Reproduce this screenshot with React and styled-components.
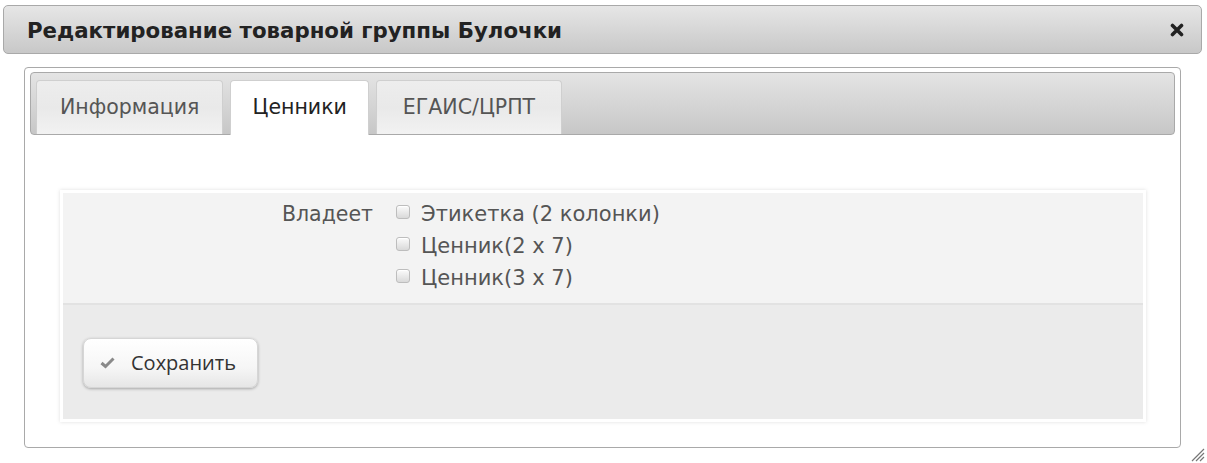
import React, { useState } from "react";
import styled, { createGlobalStyle } from "styled-components";

const Global = createGlobalStyle`
  html, body {
    margin: 0;
    padding: 0;
    background: #fff;
  }
  body {
    font-family: "DejaVu Sans", Verdana, sans-serif;
    color: #333;
  }
`;

const Dialog = styled.div`
  position: relative;
  width: 1207px;
  height: 463px;
  box-sizing: border-box;
  padding: 5px 5px 0 3px;
`;

const TitleBar = styled.div`
  height: 49px;
  box-sizing: border-box;
  border: 1px solid #a9a9a9;
  border-radius: 5px;
  background: linear-gradient(#e6e6e6, #c8c8c8);
  display: flex;
  align-items: center;
  justify-content: space-between;
  padding: 1px 14px 0 23px;
`;

const Title = styled.span`
  font-weight: bold;
  font-size: 21.3px;
  color: #222;
`;

const Close = styled.button`
  width: 20px;
  height: 20px;
  padding: 0;
  border: 0;
  background: none;
  display: flex;
  align-items: center;
  justify-content: center;
  cursor: pointer;
`;

const Body = styled.div`
  padding: 13px 21px 0 21px;
`;

const Panel = styled.div`
  height: 381px;
  box-sizing: border-box;
  border: 1px solid #a9a9a9;
  border-radius: 4px;
  padding: 4px 5px;
`;

const TabsHeader = styled.div`
  height: 63px;
  box-sizing: border-box;
  border: 1px solid #a9a9a9;
  border-radius: 4px;
  background: linear-gradient(#e4e4e4, #c7c7c7);
  display: flex;
  align-items: flex-end;
  gap: 7px;
  padding: 0 0 0 5px;
`;

const Tab = styled.button`
  height: ${(p) => (p.$active ? "55px" : "54px")};
  margin-bottom: ${(p) => (p.$active ? "-1px" : "0")};
  box-sizing: border-box;
  border: 1px solid #cfcfcf;
  border-bottom: 0;
  border-radius: 4px 4px 0 0;
  background: ${(p) =>
    p.$active ? "#fff" : "linear-gradient(#ededed, #e9e9e9 50%, #f2f2f2)"};
  color: ${(p) => (p.$active ? "#222" : "#555")};
  font-family: "DejaVu Sans", Verdana, sans-serif;
  font-size: 20.5px;
  padding: 0 ${(p) => p.$pad || 22}px 2px;
  cursor: pointer;
`;

const TabBody = styled.div`
  padding: 55px 29px 0 30px;
`;

const FormBox = styled.div`
  border: 3px solid #fff;
  box-shadow: 0 0 4px rgba(0, 0, 0, 0.13);
`;

const FieldSection = styled.div`
  background: #f3f3f3;
  border-bottom: 2px solid #e2e2e2;
  display: grid;
  grid-template-columns: 310px 1fr;
  column-gap: 23px;
  padding: 5px 0 9px;
`;

const Label = styled.div`
  text-align: right;
  font-size: 20.5px;
  line-height: 32px;
  color: #555;
`;

const Options = styled.div`
  display: flex;
  flex-direction: column;
`;

const Option = styled.label`
  display: flex;
  align-items: center;
  gap: 11px;
  font-size: 21px;
  line-height: 32px;
  color: #555;
  cursor: pointer;
`;

const Box = styled.span`
  width: 14px;
  height: 14px;
  box-sizing: border-box;
  border: 1px solid #bdbdbd;
  border-radius: 3px;
  background: linear-gradient(#fbfbfb, #d9d9d9);
  box-shadow: inset 0 1px 0 #fff;
  margin-top: -4px;
  flex: none;
`;

const ActionSection = styled.div`
  background: #ebebeb;
  padding: 33px 20px 31px;
`;

const SaveButton = styled.button`
  height: 50px;
  width: 175px;
  box-sizing: border-box;
  border: 1px solid #d6d6d6;
  border-radius: 8px;
  background: linear-gradient(#ffffff, #f6f6f6 60%, #e6e6e6);
  box-shadow: 0 1px 3px rgba(0, 0, 0, 0.3);
  display: flex;
  align-items: center;
  gap: 16px;
  padding: 0 0 2px 16px;
  font-family: "Open Sans", "DejaVu Sans", sans-serif;
  font-size: 20px;
  color: #333;
  cursor: pointer;
`;

const Grip = styled.svg`
  position: absolute;
  right: 2px;
  bottom: 1px;
`;

const tabs = [
  { id: "info", label: "Информация", pad: 23 },
  { id: "prices", label: "Ценники", pad: 21 },
  { id: "egais", label: "ЕГАИС/ЦРПТ", pad: 26 },
];

const options = ["Этикетка (2 колонки)", "Ценник(2 x 7)", "Ценник(3 x 7)"];

export default function App() {
  const [active, setActive] = useState("prices");

  return (
    <>
      <Global />
      <Dialog>
        <TitleBar>
          <Title>Редактирование товарной группы Булочки</Title>
          <Close aria-label="close">
            <svg width="14" height="14" viewBox="0 0 14 14">
              <path
                d="M2.5 2.5 L11.5 11.5 M11.5 2.5 L2.5 11.5"
                stroke="#222"
                strokeWidth="3.6"
                strokeLinecap="round"
              />
            </svg>
          </Close>
        </TitleBar>
        <Body>
          <Panel>
            <TabsHeader>
              {tabs.map((t) => (
                <Tab
                  key={t.id}
                  $active={active === t.id}
                  $pad={t.pad}
                  onClick={() => setActive(t.id)}
                >
                  {t.label}
                </Tab>
              ))}
            </TabsHeader>
            <TabBody>
              <FormBox>
                <FieldSection>
                  <Label>Владеет</Label>
                  <Options>
                    {options.map((o) => (
                      <Option key={o}>
                        <Box />
                        {o}
                      </Option>
                    ))}
                  </Options>
                </FieldSection>
                <ActionSection>
                  <SaveButton>
                    <svg width="15" height="13" viewBox="0 0 15 13">
                      <path
                        d="M1.5 7 L5.5 10.5 L13.5 2.5"
                        fill="none"
                        stroke="#8a8a8a"
                        strokeWidth="3"
                      />
                    </svg>
                    Сохранить
                  </SaveButton>
                </ActionSection>
              </FormBox>
            </TabBody>
          </Panel>
        </Body>
        <Grip width="16" height="16" viewBox="0 0 16 16">
          <path
            d="M15 3 L3 15 M15 7 L7 15 M15 11 L11 15"
            stroke="#777"
            strokeWidth="1.2"
          />
        </Grip>
      </Dialog>
    </>
  );
}
